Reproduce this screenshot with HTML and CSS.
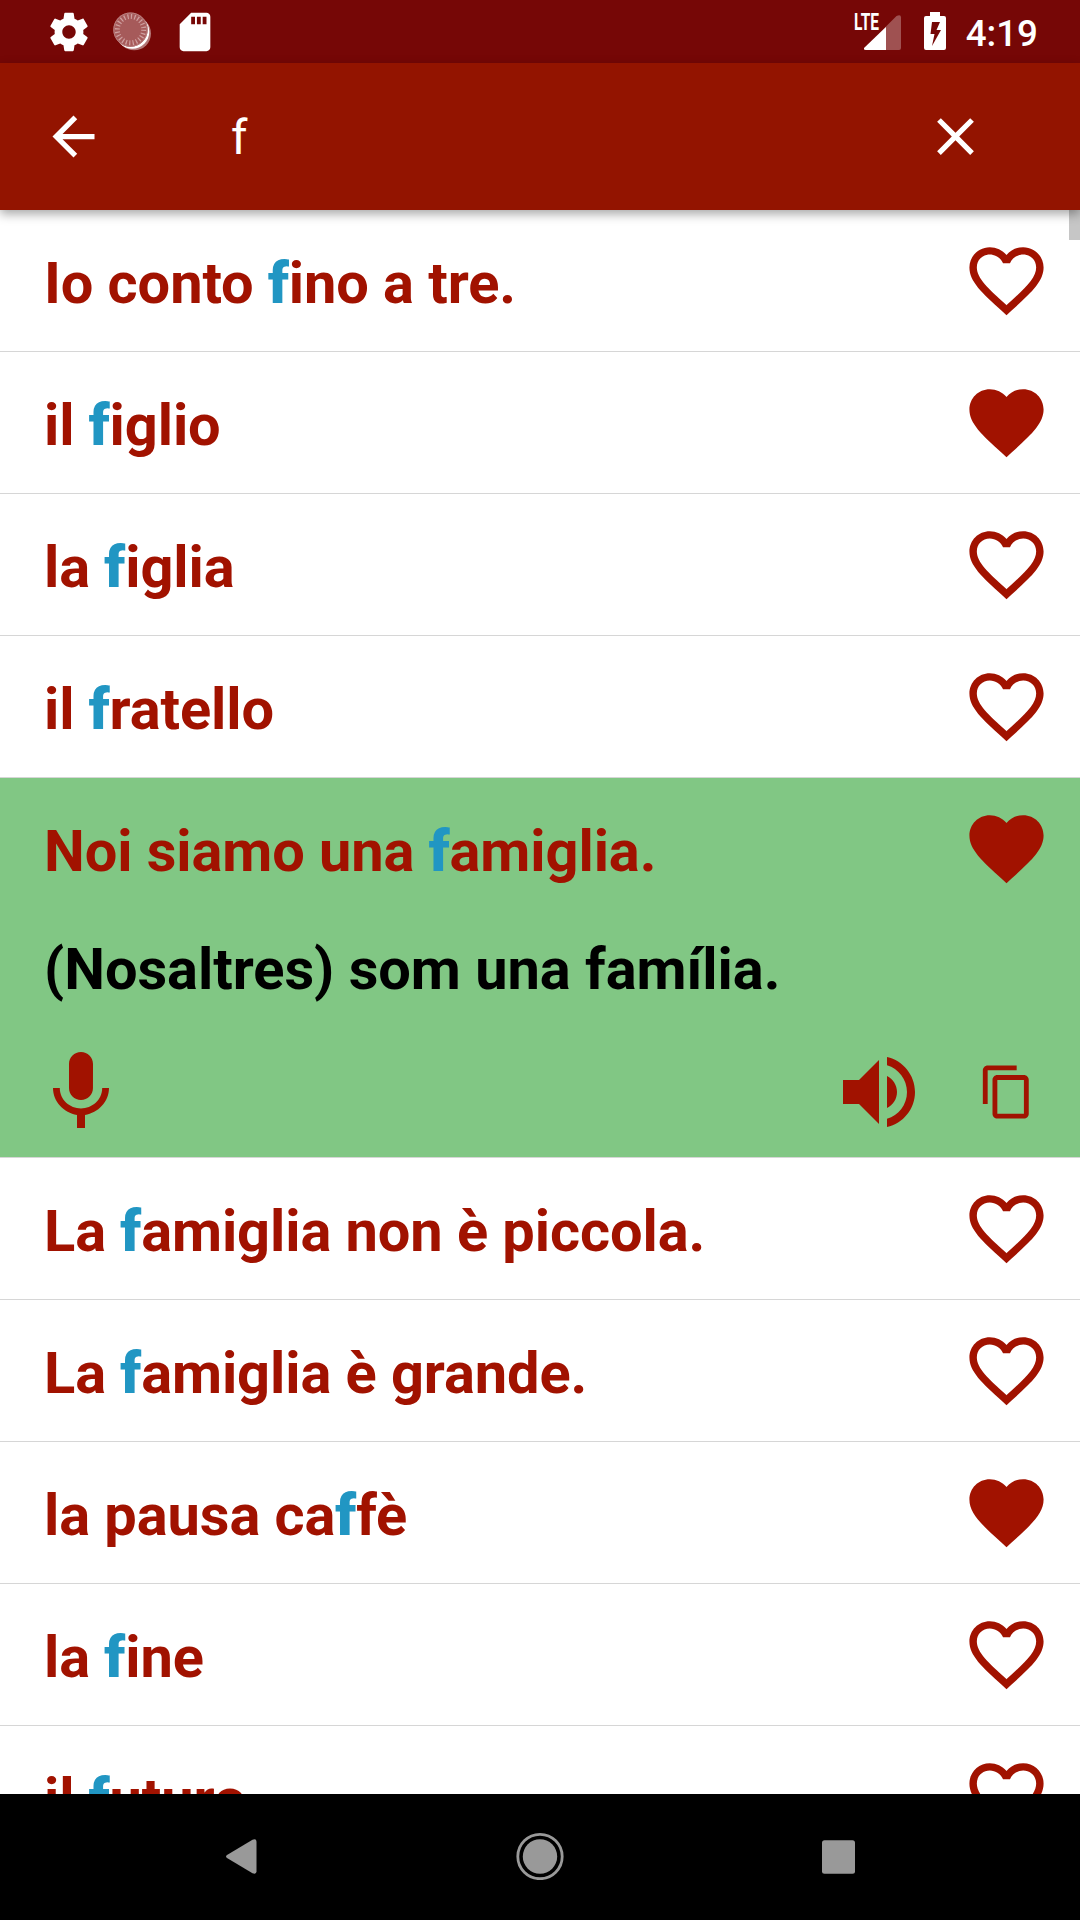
FILE: index.html
```
<!DOCTYPE html>
<html lang="it">
<head>
    <meta charset="UTF-8">
    <title>Cerca</title>
    <link rel="stylesheet" href="styles.css">
</head>
<body>
    <!-- shared icons -->
    <svg class="sprite">
        <symbol id="heart" viewBox="0 0 24 24">
            <path d="M12 21.35l-1.45-1.32C5.4 15.36 2 12.28 2 8.5 2 5.42 4.42 3 7.5 3c1.74 0 3.41.81 4.5 2.09C13.09 3.81 14.76 3 16.5 3 19.58 3 22 5.42 22 8.5c0 3.78-3.4 6.86-8.55 11.54L12 21.35z"/>
        </symbol>
        <symbol id="heart-outline" viewBox="0 0 24 24">
            <path d="M16.5 3c-1.74 0-3.41.81-4.5 2.09C10.91 3.81 9.24 3 7.5 3 4.42 3 2 5.42 2 8.5c0 3.78 3.4 6.86 8.55 11.54L12 21.35l1.45-1.32C18.6 15.36 22 12.28 22 8.5 22 5.42 19.58 3 16.5 3zm-4.4 15.55l-.1.1-.1-.1C7.14 14.24 4 11.39 4 8.5 4 6.5 5.5 5 7.5 5c1.54 0 3.04.99 3.57 2.36h1.87C13.46 5.99 14.96 5 16.5 5c2 0 3.5 1.5 3.5 3.5 0 2.89-3.14 5.74-7.9 10.05z"/>
        </symbol>
    </svg>

    <div class="screen">
        <div class="status-bar">
            <div class="notifications">
                <svg class="status-icon" viewBox="0 0 24 24"><path d="M19.43 12.98c.04-.32.07-.64.07-.98s-.03-.66-.07-.98l2.11-1.65c.19-.15.24-.42.12-.64l-2-3.46c-.12-.22-.39-.3-.61-.22l-2.49 1c-.52-.4-1.08-.73-1.69-.98l-.38-2.65C14.46 2.18 14.25 2 14 2h-4c-.25 0-.46.18-.49.42l-.38 2.65c-.61.25-1.17.59-1.69.98l-2.49-1c-.23-.09-.49 0-.61.22l-2 3.46c-.13.22-.07.49.12.64l2.11 1.65c-.04.32-.07.65-.07.98s.03.66.07.98l-2.11 1.65c-.19.15-.24.42-.12.64l2 3.46c.12.22.39.3.61.22l2.49-1c.52.4 1.08.73 1.69.98l.38 2.65c.03.24.24.42.49.42h4c.25 0 .46-.18.49-.42l.38-2.65c.61-.25 1.17-.59 1.69-.98l2.49 1c.23.09.49 0 .61-.22l2-3.46c.12-.22.07-.49-.12-.64l-2.11-1.65zM12 15.5c-1.93 0-3.5-1.57-3.5-3.5s1.57-3.5 3.5-3.5 3.5 1.57 3.5 3.5-1.57 3.5-3.5 3.5z"/></svg>
                <svg class="status-icon" viewBox="0 0 46 46">
                    <circle cx="25.2" cy="24.500" r="16.8" fill-opacity=".45"/>
                    <circle cx="23.3" cy="22.700" r="17"/>
                    <circle cx="21.500" cy="20.700" r="17.2" fill="#a65a5a"/>
                    <circle cx="21.500" cy="20.700" r="13.2" fill="none" stroke="#cfa0a0" stroke-width="5" stroke-dasharray="1.2 2.256"/>
                    <circle cx="21.500" cy="20.700" r="16.7" fill="none" stroke="#bb8080" stroke-width="1"/>
                </svg>
                <svg class="status-icon" viewBox="0 0 24 24"><path d="M18 2h-8L4.02 8 4 20c0 1.1.9 2 2 2h12c1.1 0 2-.9 2-2V4c0-1.1-.9-2-2-2zm-6 6h-2V4h2v4zm3 0h-2V4h2v4zm3 0h-2V4h2v4z"/></svg>
            </div>
            <div class="system">
                <svg class="signal" viewBox="0 0 48 40">
                    <path d="M11 38V36.5L43.5 4q4.5-2 4.5 1.500V36q0 2-2 2z" fill-opacity=".3"/>
                    <path d="M33 15v23H13q-2 0-2-1.500V36z"/>
                    <text x="1" y="18" textLength="25" lengthAdjust="spacingAndGlyphs">LTE</text>
                </svg>
                <svg class="battery" viewBox="0 0 22 38">
                    <path fill-rule="evenodd" d="M6 0h10v4h4q2 0 2 2v30q0 2-2 2H2q-2 0-2-2V6q0-2 2-2h4zM8 10L6.500 22h4L8 34 17 18h-4.500L16 10z"/>
                </svg>
                <span class="clock">4:19</span>
            </div>
        </div>

        <div class="search-bar">
            <svg class="bar-icon" viewBox="0 0 24 24"><path d="M20 11H7.830l5.590-5.590L12 4l-8 8 8 8 1.410-1.410L7.830 13H20v-2z"/></svg>
            <span class="query">f</span>
            <svg class="bar-icon" viewBox="0 0 24 24"><path d="M19 6.410L17.590 5 12 10.590 6.410 5 5 6.410 10.590 12 5 17.590 6.410 19 12 13.410 17.590 19 19 17.590 13.410 12z"/></svg>
        </div>

        <div class="results">
            <div class="scrollbar"></div>
            <div class="item">
                <div class="row"><span class="phrase">Io conto <b>f</b>ino a tre.</span><svg class="fav"><use href="#heart-outline"/></svg></div>
            </div>
            <div class="item">
                <div class="row"><span class="phrase">il <b>f</b>iglio</span><svg class="fav"><use href="#heart"/></svg></div>
            </div>
            <div class="item">
                <div class="row"><span class="phrase">la <b>f</b>iglia</span><svg class="fav"><use href="#heart-outline"/></svg></div>
            </div>
            <div class="item">
                <div class="row"><span class="phrase">il <b>f</b>ratello</span><svg class="fav"><use href="#heart-outline"/></svg></div>
            </div>
            <div class="item open">
                <div class="row"><span class="phrase">Noi siamo una <b>f</b>amiglia.</span><svg class="fav"><use href="#heart"/></svg></div>
                <div class="translation">(Nosaltres) som una família.</div>
                <div class="actions">
                    <svg class="action mic" viewBox="0 0 24 24"><path d="M12 14c1.660 0 2.990-1.340 2.990-3L15 5c0-1.660-1.340-3-3-3S9 3.340 9 5v6c0 1.660 1.340 3 3 3zm5.300-3c0 3-2.540 5.100-5.300 5.100S6.700 14 6.700 11H5c0 3.410 2.720 6.230 6 6.720V21h2v-3.280c3.280-.48 6-3.300 6-6.720h-1.700z"/></svg>
                    <svg class="action" viewBox="0 0 24 24"><path d="M3 9v6h4l5 5V4L7 9H3zm13.500 3c0-1.770-1.020-3.290-2.500-4.030v8.050c1.480-.73 2.500-2.250 2.500-4.020zM14 3.230v2.060c2.890.86 5 3.540 5 6.710s-2.110 5.850-5 6.710v2.060c4.010-.91 7-4.490 7-8.770s-2.990-7.860-7-8.770z"/></svg>
                    <svg class="copy" viewBox="0 0 24 24"><path d="M16 1H4c-1.100 0-2 .9-2 2v14h2V3h12V1zm3 4H8c-1.100 0-2 .9-2 2v14c0 1.100.9 2 2 2h11c1.100 0 2-.9 2-2V7c0-1.100-.9-2-2-2zm0 16H8V7h11v14z"/></svg>
                </div>
            </div>
            <div class="item">
                <div class="row"><span class="phrase">La <b>f</b>amiglia non è piccola.</span><svg class="fav"><use href="#heart-outline"/></svg></div>
            </div>
            <div class="item">
                <div class="row"><span class="phrase">La <b>f</b>amiglia è grande.</span><svg class="fav"><use href="#heart-outline"/></svg></div>
            </div>
            <div class="item">
                <div class="row"><span class="phrase">la pausa ca<b>f</b>fè</span><svg class="fav"><use href="#heart"/></svg></div>
            </div>
            <div class="item">
                <div class="row"><span class="phrase">la <b>f</b>ine</span><svg class="fav"><use href="#heart-outline"/></svg></div>
            </div>
            <div class="item">
                <div class="row"><span class="phrase">il <b>f</b>uturo</span><svg class="fav"><use href="#heart-outline"/></svg></div>
            </div>
        </div>

        <div class="nav-bar">
            <svg class="nav-icon" viewBox="0 0 48 48"><path d="M10 23L35.500 7.800q4-1.500 4 2v29.400q0 3.500-4 2L10 26q-2-1.500 0-3z"/></svg>
            <svg class="nav-icon" viewBox="0 0 48 48"><circle cx="24" cy="24.500" r="17.200"/><circle cx="24" cy="24.500" r="22.200" fill="none" stroke="#999" stroke-width="2.800"/></svg>
            <svg class="nav-icon" viewBox="0 0 48 48"><rect x="7" y="8.200" width="33" height="33.500" rx="2.500"/></svg>
        </div>
    </div>
</body>
</html>
```
FILE: styles.css
```
* {
    box-sizing: border-box;
}

body {
    margin: 0;
    font-family: Roboto, sans-serif;
    background-color: #fff;
}

svg {
    display: block;
    flex-shrink: 0;
}

.sprite {
    display: none;
}

.screen {
    width: 1080px;
    height: 1920px;
    display: flex;
    flex-direction: column;
    overflow: hidden;
}

/* status bar */
.status-bar {
    height: 63px;
    flex-shrink: 0;
    display: flex;
    justify-content: space-between;
    background-color: #760706;
    color: #fff;
    fill: #fff;
    padding: 0 42px 0 45.5px;
}

.notifications, .system {
    display: flex;
}

.notifications {
    gap: 17px;
    padding-top: 8.5px;
}

.status-icon {
    width: 46px;
    height: 46px;
}

.system {
    padding-top: 12px;
}

.signal {
    width: 48px;
    height: 40px;
    margin-right: 23px;
    overflow: visible;
}

.signal text {
    font-size: 23px;
    font-weight: 700;
}

.battery {
    width: 22px;
    height: 38px;
    margin-right: 20px;
}

.clock {
    font-size: 36.75px;
    font-weight: 500;
    line-height: 43px;
}

/* search bar */
.search-bar {
    height: 147px;
    flex-shrink: 0;
    display: flex;
    align-items: center;
    background-color: #931400;
    color: #fff;
    fill: #fff;
    padding: 0 93px 0 42px;
    box-shadow: 0 4px 10px rgba(0, 0, 0, 0.35);
    position: relative;
    z-index: 1;
}

.bar-icon {
    width: 63px;
    height: 63px;
}

.query {
    flex: 1;
    padding: 2px 0 0 126px;
    font-size: 47.25px;
}

/* results */
.results {
    flex: 1;
    min-height: 0;
    overflow: hidden;
    position: relative;
}

.scrollbar {
    position: absolute;
    top: 0;
    right: 0;
    width: 11px;
    height: 30px;
    background-color: #c6c6c6;
}

.item {
    border-bottom: 1px solid #d6d6d6;
    color: #a11200;
    fill: #a11200;
    font-size: 57.75px;
    font-weight: 700;
}

.row {
    height: 141px;
    display: flex;
    align-items: center;
    justify-content: space-between;
    padding: 3px 29px 0 44px;
}

.phrase {
    padding-top: 2px;
    letter-spacing: -0.08px;
}

.phrase b {
    color: #2196c3;
}

.fav {
    width: 89px;
    height: 89px;
    margin-bottom: 3px;
}

.open {
    height: 380px;
    background-color: #81c784;
}

.translation {
    color: #000;
    padding-left: 44px;
    line-height: 68px;
    margin-top: 16px;
    letter-spacing: -0.03px;
}

.actions {
    display: flex;
    align-items: center;
    padding: 0 44px 0 33px;
    margin-top: 40.5px;
}

.action {
    width: 96px;
    height: 96px;
}

.mic {
    margin-right: auto;
}

.copy {
    width: 58px;
    height: 58px;
    margin-left: 51px;
}

/* navigation bar */
.nav-bar {
    height: 126px;
    flex-shrink: 0;
    display: flex;
    justify-content: center;
    align-items: center;
    gap: 251px;
    background-color: #000;
    fill: #999;
    padding: 0 1px 2px 0;
}

.nav-icon {
    width: 48px;
    height: 48px;
}
```
